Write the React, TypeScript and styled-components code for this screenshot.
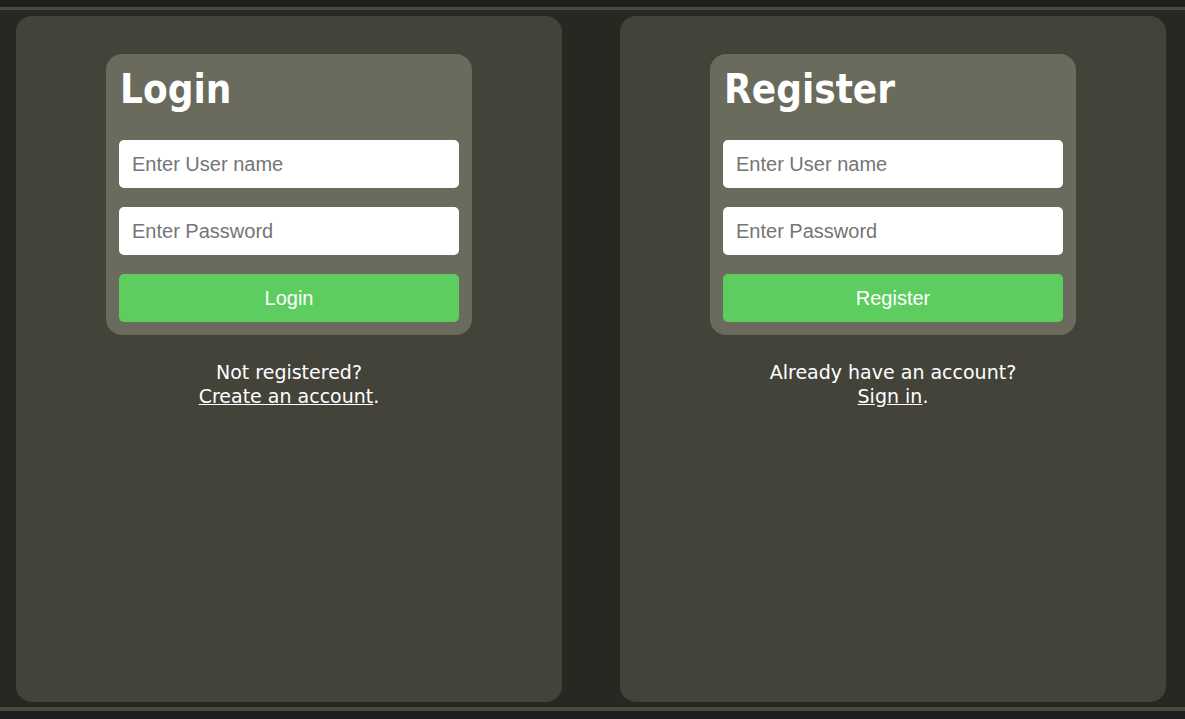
import React from "react";
import styled, { createGlobalStyle } from "styled-components";

const Global = createGlobalStyle`
  html, body { margin: 0; padding: 0; background: #1f1f1d; }
  body { font-family: "DejaVu Sans", sans-serif; }
`;

const Frame = styled.div`
  height: 719px;
  box-sizing: border-box;
  padding-top: 7px;
  padding-bottom: 8px;
  background: #1f1f1d;
`;

const Stage = styled.main`
  height: 100%;
  box-sizing: border-box;
  border-top: 3px solid #4a4b3f;
  border-bottom: 4px solid #4a4b3f;
  background: #282823;
  padding: 6px 19px 5px 16px;
  display: grid;
  grid-template-columns: 546px 546px;
  column-gap: 58px;
`;

const Panel = styled.section`
  background: #43433a;
  border-radius: 16px;
  padding-top: 38px;
  display: flex;
  flex-direction: column;
  align-items: center;
`;

const Card = styled.form`
  width: 366px;
  box-sizing: border-box;
  background: #6a6b5c;
  border-radius: 16px;
  padding: 12px 13px 13px;
  display: flex;
  flex-direction: column;
`;

const Title = styled.h1`
  margin: 0 0 28px 1px;
  font-family: "DejaVu Sans Condensed", "DejaVu Sans", sans-serif;
  font-stretch: condensed;
  font-weight: bold;
  font-size: 40px;
  color: #ffffff;
`;

const Input = styled.input`
  height: 48px;
  box-sizing: border-box;
  border: none;
  border-radius: 5px;
  background: #ffffff;
  padding: 0 13px;
  margin-bottom: 19px;
  font-family: "Liberation Sans", Arial, sans-serif;
  font-size: 20px;
  color: #333;
  outline: none;
  &::placeholder { color: #757575; }
`;

const Button = styled.button`
  height: 48px;
  border: none;
  border-radius: 5px;
  background: #5ccd5e;
  color: #ffffff;
  font-family: "Liberation Sans", Arial, sans-serif;
  font-size: 20px;
  cursor: pointer;
`;

const Footer = styled.p`
  margin: 25px 0 0;
  text-align: center;
  color: #ffffff;
  font-family: "DejaVu Sans", sans-serif;
  font-size: 19px;
  line-height: 24px;
`;

const Link = styled.a`
  color: #ffffff;
  text-decoration: underline;
`;

function AuthPanel(props: { title: string; question: string; link: string }) {
  return (
    <Panel>
      <Card onSubmit={(e) => e.preventDefault()}>
        <Title>{props.title}</Title>
        <Input type="text" placeholder="Enter User name" />
        <Input type="password" placeholder="Enter Password" />
        <Button type="submit">{props.title}</Button>
      </Card>
      <Footer>
        {props.question}
        <br />
        <Link href="#">{props.link}</Link>.
      </Footer>
    </Panel>
  );
}

export default function App() {
  return (
    <Frame>
      <Global />
      <Stage>
        <AuthPanel title="Login" question="Not registered?" link="Create an account" />
        <AuthPanel title="Register" question="Already have an account?" link="Sign in" />
      </Stage>
    </Frame>
  );
}
